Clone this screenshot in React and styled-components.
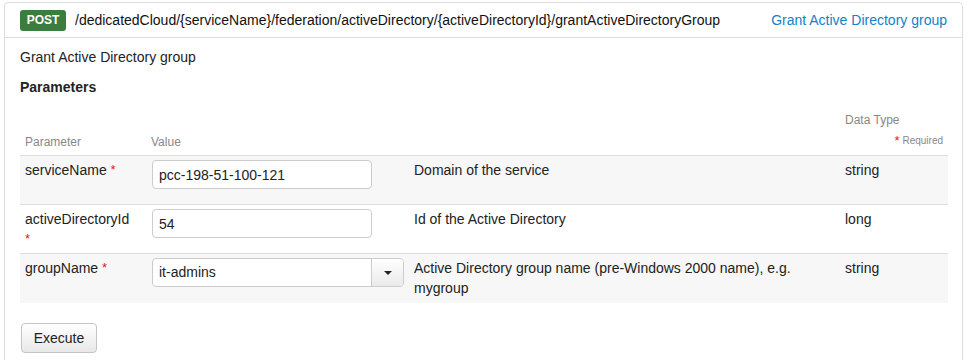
import React from 'react'
import styled, { createGlobalStyle } from 'styled-components'

const PARAMS = [
  {
    name: 'serviceName',
    value: 'pcc-198-51-100-121',
    description: 'Domain of the service',
    type: 'string',
  },
  {
    name: 'activeDirectoryId',
    value: '54',
    description: 'Id of the Active Directory',
    type: 'long',
  },
  {
    name: 'groupName',
    value: 'it-admins',
    description: 'Active Directory group name (pre-Windows 2000 name), e.g. mygroup',
    type: 'string',
    select: true,
  },
]

const GlobalStyle = createGlobalStyle`
  body {
    margin: 0;
    background: #fff;
    font-family: "Liberation Sans", Arial, sans-serif;
    color: #222;
  }
`

const App = () => {
  return (
    <Page>
      <GlobalStyle />
      <Panel>
        <Header>
          <Method>POST</Method>
          <Path>/dedicatedCloud/{'{serviceName}'}/federation/activeDirectory/{'{activeDirectoryId}'}/grantActiveDirectoryGroup</Path>
          <Summary href='#'>Grant Active Directory group</Summary>
        </Header>
        <Body>
          <Description>Grant Active Directory group</Description>
          <Heading>Parameters</Heading>
          <Table>
            <colgroup>
              <col style={{ width: 126 }} />
              <col style={{ width: 263 }} />
              <col style={{ width: 431 }} />
              <col style={{ width: 108 }} />
            </colgroup>
            <thead>
              <tr>
                <Th>Parameter</Th>
                <Th>Value</Th>
                <Th />
                <Th align='right'>
                  <TypeLabel>Data Type</TypeLabel>
                  <Required><Star>*</Star> Required</Required>
                </Th>
              </tr>
            </thead>
            <tbody>
              {PARAMS.map((p, i) => (
                <Row key={p.name} striped={i % 2 === 0}>
                  <NameCell>
                    {p.name} <Star>*</Star>
                  </NameCell>
                  <ValueCell>
                    {p.select ? (
                      <SelectBox>
                        <SelectValue>{p.value}</SelectValue>
                        <SelectButton>
                          <Caret />
                        </SelectButton>
                      </SelectBox>
                    ) : (
                      <Input defaultValue={p.value} />
                    )}
                  </ValueCell>
                  <Td>{p.description}</Td>
                  <Td>{p.type}</Td>
                </Row>
              ))}
            </tbody>
          </Table>
          <Button>Execute</Button>
        </Body>
      </Panel>
    </Page>
  )
}

const Page = styled.div`
  padding: 2px 5px 0 4px;
  height: 358px;
  overflow: hidden;
`
const Panel = styled.div`
  border: 1px solid #ddd;
  border-radius: 4px;
  height: 400px;
`
const Header = styled.div`
  display: flex;
  align-items: center;
  height: 34px;
  padding: 0 15px;
  border-bottom: 1px solid #ddd;
  font-size: 14px;
`
const Method = styled.span`
  background: #3b7d3f;
  color: #fff;
  font-size: 12px;
  font-weight: bold;
  border-radius: 3px;
  width: 46px;
  height: 21px;
  line-height: 21px;
  text-align: center;
  flex: none;
`
const Path = styled.span`
  margin-left: 9px;
  color: #111;
  flex: 1;
  white-space: nowrap;
`
const Summary = styled.a`
  color: #1481c4;
  text-decoration: none;
  white-space: nowrap;
`
const Body = styled.div`
  padding: 9px 15px 0 15px;
  font-size: 14px;
  line-height: 20px;
`
const Description = styled.div`
  color: #222;
`
const Heading = styled.div`
  font-weight: bold;
  margin-top: 10px;
`
const Table = styled.table`
  width: 928px;
  border-collapse: collapse;
  table-layout: fixed;
  margin-top: 13px;
`
const Th = styled.th`
  text-align: ${p => p.align || 'left'};
  font-weight: normal;
  color: #888;
  font-size: 12px;
  vertical-align: bottom;
  padding: 0 5px 3px;
  border-bottom: 1px solid #ddd;
  line-height: 20px;
`
const TypeLabel = styled.div`
  text-align: left;
`
const Required = styled.div`
  font-size: 10px;
  line-height: 22px;
`
const Row = styled.tr`
  background: ${p => (p.striped ? '#f7f7f7' : '#fff')};
  border-top: 1px solid #ddd;
  height: 49px;
  &:first-child {
    border-top: none;
  }
`
const Td = styled.td`
  vertical-align: top;
  padding: 4px 5px 0;
  color: #222;
`
const NameCell = styled(Td)`
  padding-right: 10px;
`
const ValueCell = styled(Td)`
  padding-left: 6px;
`
const Star = styled.span`
  color: #e01b1b;
  font-size: 13px;
  vertical-align: top;
`
const Input = styled.input`
  box-sizing: border-box;
  width: 220px;
  height: 29px;
  border: 1px solid #ccc;
  border-radius: 4px;
  padding: 0 6px;
  font-family: inherit;
  font-size: 14px;
  color: #222;
  background: #fff;
`
const SelectBox = styled.div`
  box-sizing: border-box;
  display: flex;
  width: 252px;
  height: 29px;
  border: 1px solid #ccc;
  border-radius: 4px;
  background: #fff;
  overflow: hidden;
`
const SelectValue = styled.div`
  flex: 1;
  padding: 0 6px;
  line-height: 27px;
`
const SelectButton = styled.div`
  width: 31px;
  border-left: 1px solid #ccc;
  background: linear-gradient(#fff, #eaeaea);
  display: flex;
  align-items: center;
  justify-content: center;
`
const Caret = styled.span`
  width: 0;
  height: 0;
  border-left: 4px solid transparent;
  border-right: 4px solid transparent;
  border-top: 4px solid #222;
`
const Button = styled.button`
  margin-top: 20px;
  margin-left: 1px;
  width: 76px;
  height: 30px;
  border: 1px solid #c4c4c4;
  border-radius: 4px;
  background: linear-gradient(#fff, #e8e8e8);
  font-family: inherit;
  font-size: 14px;
  color: #222;
`

export default App
